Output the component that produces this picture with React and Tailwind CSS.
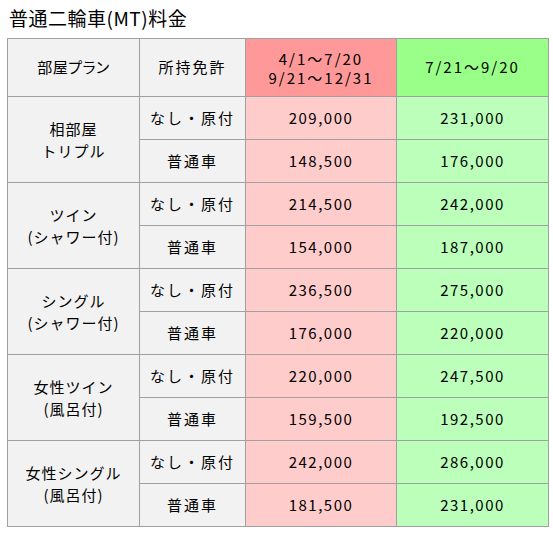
const rows = [
  { plan: ["相部屋", "トリプル"], prices: [["209,000", "231,000"], ["148,500", "176,000"]] },
  { plan: ["ツイン", "(シャワー付)"], prices: [["214,500", "242,000"], ["154,000", "187,000"]] },
  { plan: ["シングル", "(シャワー付)"], prices: [["236,500", "275,000"], ["176,000", "220,000"]] },
  { plan: ["女性ツイン", "(風呂付)"], prices: [["220,000", "247,500"], ["159,500", "192,500"]] },
  { plan: ["女性シングル", "(風呂付)"], prices: [["242,000", "286,000"], ["181,500", "231,000"]] },
];

const licenses = ["なし・原付", "普通車"];

const App = () => {
  return (
    <div
      className="w-[553px] h-[535px] bg-white text-black"
      style={{ fontFamily: '"Noto Sans CJK JP", "DejaVu Sans", sans-serif' }}
    >
      <h2 className="text-[19px] leading-[24px] pl-[9px] pt-[6px] h-[38px] tracking-[0.5px]">普通二輪車(MT)料金</h2>
      <table className="ml-[7px] border-collapse table-fixed w-[541px] text-[15px] text-center">
        <colgroup>
          <col className="w-[132px]" />
          <col className="w-[106px]" />
          <col className="w-[151px]" />
          <col className="w-[152px]" />
        </colgroup>
        <thead>
          <tr className="h-[58px]">
            <th className="border border-[#a0a0a0] bg-[#f2f2f2] font-normal tracking-[0.5px] [font-feature-settings:'palt']">
              部屋プラン
            </th>
            <th className="border border-[#a0a0a0] bg-[#f2f2f2] font-normal tracking-[2px]">所持免許</th>
            <th className="border border-[#a0a0a0] bg-[#ff9999] font-normal leading-[19px] tracking-[2px]">
              4/1～7/20
              <br />
              9/21～12/31
            </th>
            <th className="border border-[#a0a0a0] bg-[#99ff88] font-normal tracking-[2px]">7/21～9/20</th>
          </tr>
        </thead>
        <tbody>
          {rows.map((r) =>
            r.prices.map((p, i) => (
              <tr key={r.plan[0] + i} className="h-[43px]">
                {i === 0 && (
                  <td rowSpan={2} className="border border-[#a0a0a0] bg-[#f2f2f2] leading-[22px] tracking-[1px]">
                    {r.plan[0]}
                    <br />
                    {r.plan[1]}
                  </td>
                )}
                <td className="border border-[#a0a0a0] bg-[#f2f2f2] tracking-[2px]">{licenses[i]}</td>
                <td className="border border-[#a0a0a0] bg-[#ffcccc] tracking-[1.5px]">{p[0]}</td>
                <td className="border border-[#a0a0a0] bg-[#bbffbb] tracking-[1.5px]">{p[1]}</td>
              </tr>
            ))
          )}
        </tbody>
      </table>
    </div>
  );
};

export default App;
